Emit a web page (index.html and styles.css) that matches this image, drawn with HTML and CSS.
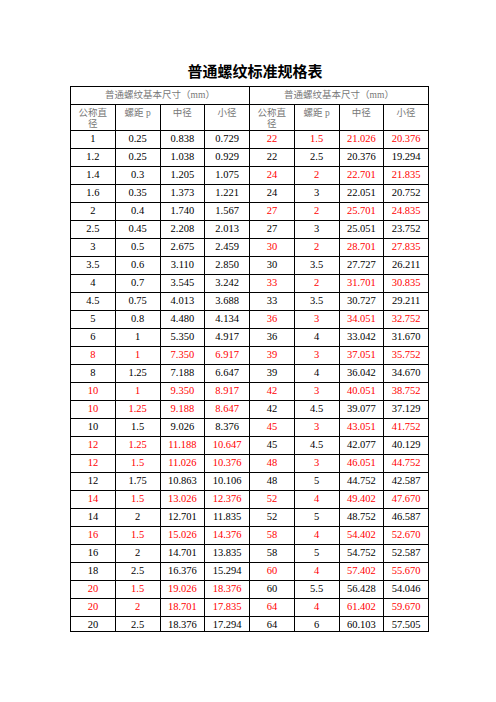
FILE: index.html
```html
<!DOCTYPE html>
<html lang="zh">
<head>
<meta charset="utf-8">
<title>普通螺纹标准规格表</title>
<link rel="stylesheet" href="styles.css">
</head>
<body>
<div class="page">
  <h1 class="title">普通螺纹标准规格表</h1>
  <table class="spec">
    <colgroup>
      <col><col><col><col><col><col><col><col>
    </colgroup>
    <thead>
      <tr class="h1row">
        <th colspan="4">普通螺纹基本尺寸（mm）</th>
        <th colspan="4">普通螺纹基本尺寸（mm）</th>
      </tr>
      <tr class="h2row">
        <th>公称直径</th><th>螺距 p</th><th>中径</th><th>小径</th>
        <th>公称直径</th><th>螺距 p</th><th>中径</th><th>小径</th>
      </tr>
    </thead>
    <tbody>
      <tr><td>1</td><td>0.25</td><td>0.838</td><td>0.729</td><td class="r">22</td><td class="r">1.5</td><td class="r">21.026</td><td class="r">20.376</td></tr>
      <tr><td>1.2</td><td>0.25</td><td>1.038</td><td>0.929</td><td>22</td><td>2.5</td><td>20.376</td><td>19.294</td></tr>
      <tr><td>1.4</td><td>0.3</td><td>1.205</td><td>1.075</td><td class="r">24</td><td class="r">2</td><td class="r">22.701</td><td class="r">21.835</td></tr>
      <tr><td>1.6</td><td>0.35</td><td>1.373</td><td>1.221</td><td>24</td><td>3</td><td>22.051</td><td>20.752</td></tr>
      <tr><td>2</td><td>0.4</td><td>1.740</td><td>1.567</td><td class="r">27</td><td class="r">2</td><td class="r">25.701</td><td class="r">24.835</td></tr>
      <tr><td>2.5</td><td>0.45</td><td>2.208</td><td>2.013</td><td>27</td><td>3</td><td>25.051</td><td>23.752</td></tr>
      <tr><td>3</td><td>0.5</td><td>2.675</td><td>2.459</td><td class="r">30</td><td class="r">2</td><td class="r">28.701</td><td class="r">27.835</td></tr>
      <tr><td>3.5</td><td>0.6</td><td>3.110</td><td>2.850</td><td>30</td><td>3.5</td><td>27.727</td><td>26.211</td></tr>
      <tr><td>4</td><td>0.7</td><td>3.545</td><td>3.242</td><td class="r">33</td><td class="r">2</td><td class="r">31.701</td><td class="r">30.835</td></tr>
      <tr><td>4.5</td><td>0.75</td><td>4.013</td><td>3.688</td><td>33</td><td>3.5</td><td>30.727</td><td>29.211</td></tr>
      <tr><td>5</td><td>0.8</td><td>4.480</td><td>4.134</td><td class="r">36</td><td class="r">3</td><td class="r">34.051</td><td class="r">32.752</td></tr>
      <tr><td>6</td><td>1</td><td>5.350</td><td>4.917</td><td>36</td><td>4</td><td>33.042</td><td>31.670</td></tr>
      <tr><td class="r">8</td><td class="r">1</td><td class="r">7.350</td><td class="r">6.917</td><td class="r">39</td><td class="r">3</td><td class="r">37.051</td><td class="r">35.752</td></tr>
      <tr><td>8</td><td>1.25</td><td>7.188</td><td>6.647</td><td>39</td><td>4</td><td>36.042</td><td>34.670</td></tr>
      <tr><td class="r">10</td><td class="r">1</td><td class="r">9.350</td><td class="r">8.917</td><td class="r">42</td><td class="r">3</td><td class="r">40.051</td><td class="r">38.752</td></tr>
      <tr><td class="r">10</td><td class="r">1.25</td><td class="r">9.188</td><td class="r">8.647</td><td>42</td><td>4.5</td><td>39.077</td><td>37.129</td></tr>
      <tr><td>10</td><td>1.5</td><td>9.026</td><td>8.376</td><td class="r">45</td><td class="r">3</td><td class="r">43.051</td><td class="r">41.752</td></tr>
      <tr><td class="r">12</td><td class="r">1.25</td><td class="r">11.188</td><td class="r">10.647</td><td>45</td><td>4.5</td><td>42.077</td><td>40.129</td></tr>
      <tr><td class="r">12</td><td class="r">1.5</td><td class="r">11.026</td><td class="r">10.376</td><td class="r">48</td><td class="r">3</td><td class="r">46.051</td><td class="r">44.752</td></tr>
      <tr><td>12</td><td>1.75</td><td>10.863</td><td>10.106</td><td>48</td><td>5</td><td>44.752</td><td>42.587</td></tr>
      <tr><td class="r">14</td><td class="r">1.5</td><td class="r">13.026</td><td class="r">12.376</td><td class="r">52</td><td class="r">4</td><td class="r">49.402</td><td class="r">47.670</td></tr>
      <tr><td>14</td><td>2</td><td>12.701</td><td>11.835</td><td>52</td><td>5</td><td>48.752</td><td>46.587</td></tr>
      <tr><td class="r">16</td><td class="r">1.5</td><td class="r">15.026</td><td class="r">14.376</td><td class="r">58</td><td class="r">4</td><td class="r">54.402</td><td class="r">52.670</td></tr>
      <tr><td>16</td><td>2</td><td>14.701</td><td>13.835</td><td>58</td><td>5</td><td>54.752</td><td>52.587</td></tr>
      <tr><td>18</td><td>2.5</td><td>16.376</td><td>15.294</td><td class="r">60</td><td class="r">4</td><td class="r">57.402</td><td class="r">55.670</td></tr>
      <tr><td class="r">20</td><td class="r">1.5</td><td class="r">19.026</td><td class="r">18.376</td><td>60</td><td>5.5</td><td>56.428</td><td>54.046</td></tr>
      <tr><td class="r">20</td><td class="r">2</td><td class="r">18.701</td><td class="r">17.835</td><td class="r">64</td><td class="r">4</td><td class="r">61.402</td><td class="r">59.670</td></tr>
      <tr class="last"><td>20</td><td>2.5</td><td>18.376</td><td>17.294</td><td>64</td><td>6</td><td>60.103</td><td>57.505</td></tr>
    </tbody>
  </table>
</div>
</body>
</html>
```
FILE: styles.css
```css
html, body {
  margin: 0;
  padding: 0;
  background: #ffffff;
}

.page {
  padding: 61px 0 0 70px;
  font-family: "Liberation Serif", "Noto Sans CJK SC", serif;
  color: #000;
}

.title {
  width: 358px;
  margin: 0 0 5px 0;
  padding-left: 12px;
  box-sizing: border-box;
  text-align: center;
  font-family: "Noto Sans CJK SC", sans-serif;
  font-size: 15px;
  font-weight: 700;
  line-height: 20px;
}

.spec {
  width: 359px;
  table-layout: fixed;
  border-collapse: collapse;
  border: 1px solid #000;
}

.spec th,
.spec td {
  border: 1px solid #000;
  padding: 2px 2px 0 2px;
  text-align: center;
  vertical-align: top;
  font-size: 10.5px;
  line-height: 12px;
  font-weight: 400;
  overflow: hidden;
}

.spec th {
  color: #777;
  font-family: "Liberation Serif", "Noto Sans CJK SC", serif;
  font-size: 9.5px;
}

.h1row {
  height: 18px;
}

.h1row th {
  padding-top: 2px;
}

.h2row {
  height: 26px;
}

.h2row th {
  padding: 3px 6px 0 6px;
  line-height: 10.5px;
}

.spec tbody tr {
  height: 18px;
}

.spec tbody tr.last {
  height: 15px;
}

.spec td.r {
  color: #ff0000;
}
```
